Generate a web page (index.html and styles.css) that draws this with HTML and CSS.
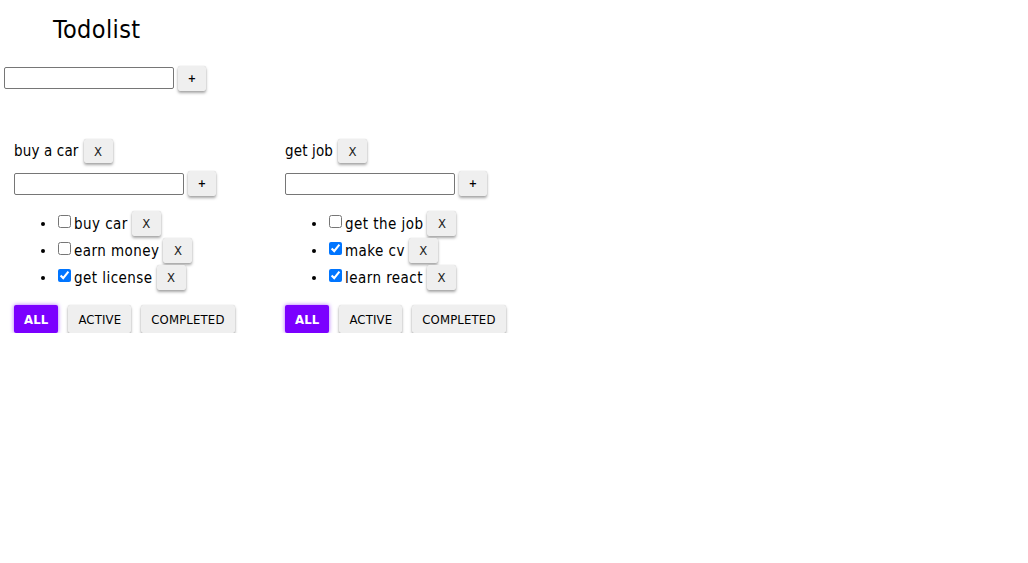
FILE: index.html
```html
<!DOCTYPE html>
<html>
<head>
<meta charset="utf-8">
<link rel="stylesheet" href="styles.css">
</head>
<body>
<div class="app">
  <h3 class="app-title">Todolist</h3>
  <div class="add-row top-add">
    <input class="text-input" type="text">
    <button class="btn btn-plus">+</button>
  </div>
  <div class="lists">
    <div class="todolist">
      <div class="list-title"><span>buy a car</span><button class="btn btn-x">X</button></div>
      <div class="add-row">
        <input class="text-input" type="text">
        <button class="btn btn-plus">+</button>
      </div>
      <ul class="tasks">
        <li><input type="checkbox" class="cb"><span class="task-text">buy car</span><button class="btn btn-x">X</button></li>
        <li><input type="checkbox" class="cb"><span class="task-text">earn money</span><button class="btn btn-x">X</button></li>
        <li><input type="checkbox" class="cb" checked><span class="task-text">get license</span><button class="btn btn-x">X</button></li>
      </ul>
      <div class="filters">
        <button class="btn btn-filter active">ALL</button>
        <button class="btn btn-filter">ACTIVE</button>
        <button class="btn btn-filter">COMPLETED</button>
      </div>
    </div>
    <div class="todolist">
      <div class="list-title"><span>get job</span><button class="btn btn-x">X</button></div>
      <div class="add-row">
        <input class="text-input" type="text">
        <button class="btn btn-plus">+</button>
      </div>
      <ul class="tasks">
        <li><input type="checkbox" class="cb"><span class="task-text">get the job</span><button class="btn btn-x">X</button></li>
        <li><input type="checkbox" class="cb" checked><span class="task-text">make cv</span><button class="btn btn-x">X</button></li>
        <li><input type="checkbox" class="cb" checked><span class="task-text">learn react</span><button class="btn btn-x">X</button></li>
      </ul>
      <div class="filters">
        <button class="btn btn-filter active">ALL</button>
        <button class="btn btn-filter">ACTIVE</button>
        <button class="btn btn-filter">COMPLETED</button>
      </div>
    </div>
  </div>
</div>
</body>
</html>
```

FILE: styles.css
```css
* { box-sizing: border-box; }
body {
  margin: 0;
  background: #fff;
  color: #000;
  font-family: "DejaVu Sans Condensed", "DejaVu Sans", sans-serif;
  font-size: 15px;
}
.app {
  padding: 0 4px;
}
.app-title {
  margin: 0;
  padding: 14px 0 0 49px;
  height: 65px;
  font-size: 25px;
  font-weight: normal;
  line-height: 32px;
  letter-spacing: 0.4px;
}
.add-row {
  display: flex;
  align-items: center;
  gap: 4px;
}
.top-add {
  height: 26px;
}
.text-input {
  width: 170px;
  height: 22px;
  border: 1px solid #767676;
  border-radius: 2px;
  padding: 1px 2px;
  margin: 0;
  font: inherit;
}
.btn {
  font-family: inherit;
  border: none;
  background: #efefef;
  color: #000;
  border-radius: 2px;
  box-shadow: 0 2px 3px rgba(0,0,0,0.35), 0 0 1px rgba(0,0,0,0.2);
  padding: 0;
  margin: 0;
  cursor: pointer;
}
.btn-plus {
  width: 28px;
  height: 25px;
  font-size: 11px;
  font-weight: bold;
}
.btn-x {
  width: 29px;
  height: 25px;
  font-size: 13px;
  margin-left: 4px;
  color: #222;
}
.list-title span {
  letter-spacing: 0.15px;
}
.task-text {
  letter-spacing: 0.45px;
}
.lists {
  display: flex;
  margin-top: 48px;
  padding-left: 10px;
}
.todolist {
  width: 271px;
}
.list-title {
  display: flex;
  align-items: center;
  height: 24px;
}
.list-title .btn-x {
  height: 24px;
  margin-left: 5px;
}
.todolist .add-row {
  margin-top: 8px;
  height: 25px;
}
.tasks {
  margin: 14px 0 0;
  padding-left: 44px;
  list-style: none;
}
.tasks li {
  height: 27px;
  display: flex;
  align-items: center;
  position: relative;
}
.tasks li::before {
  content: "";
  position: absolute;
  left: -17px;
  top: 12px;
  width: 4px;
  height: 4px;
  border-radius: 50%;
  background: #000;
}
.cb {
  margin: 0 3px 0 0;
  width: 13px;
  height: 13px;
  position: relative;
  top: -2px;
}
.filters {
  display: flex;
  gap: 10px;
  margin-top: 14px;
}
.btn-filter {
  height: 28px;
  padding: 0 10px;
  font-size: 13px;
  letter-spacing: 0.15px;
}
.btn-filter.active {
  background: #7b00ff;
  color: #fff;
  font-weight: bold;
  box-shadow: 0 0 4px rgba(123,0,255,0.6);
}
```
